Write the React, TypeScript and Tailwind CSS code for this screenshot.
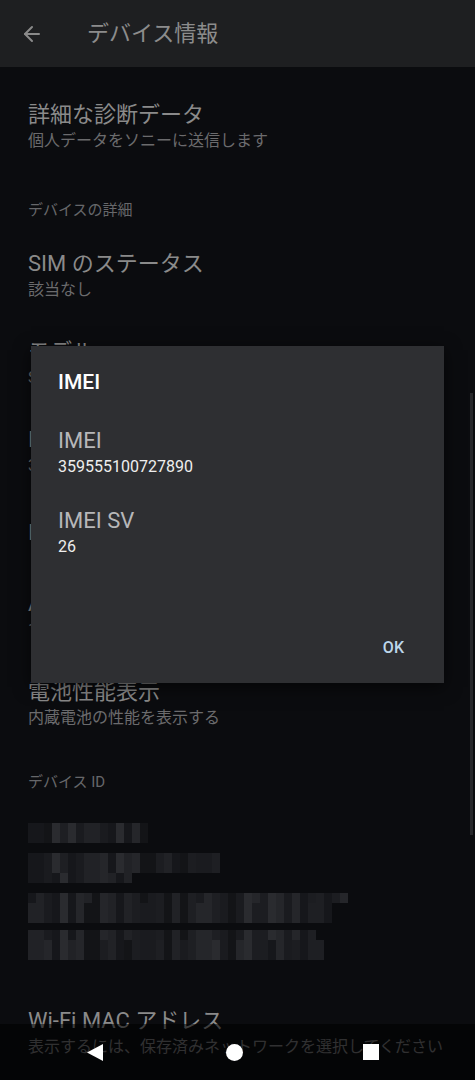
import { ArrowLeft } from 'lucide-react'

const font = { fontFamily: 'Roboto, "Noto Sans CJK JP", sans-serif' }

const shades = [
  'bg-[#16171b]',
  'bg-[#1a1b1f]',
  'bg-[#1e1f23]',
  'bg-[#212226]',
  'bg-[#25262a]',
  'bg-[#2a2b2f]',
  'bg-[#131417]',
  'bg-[#1c1d21]',
]

function MosaicRow({ width, seed }: { width: number; seed: number }) {
  const count = Math.round(width / 8)
  return (
    <div className="flex h-[10px]">
      {Array.from({ length: count }).map((_, i) => {
        const v = (i * 37 + seed * 53 + ((i * i + seed) % 7) * 11) % shades.length
        return <div key={i} className={`w-[8px] h-full ${shades[v]}`} />
      })}
    </div>
  )
}

function Item({ title, sub }: { title: string; sub?: string }) {
  return (
    <div className={`${sub ? 'h-[88px]' : 'h-[76px]'} px-[28px] flex flex-col justify-center`}>
      <div className="text-[22px] leading-[30px] text-[#8a8a8a]">{title}</div>
      {sub && <div className="text-[16px] leading-[22px] text-[#6b6b6d]">{sub}</div>}
    </div>
  )
}

export default function App() {
  return (
    <div className="relative w-[475px] h-[1080px] overflow-hidden bg-[#0b0c0f]" style={font}>
      {/* app bar */}
      <div className="h-[67px] bg-[#1e1f21] flex items-center">
        <ArrowLeft className="w-[24px] h-[24px] ml-[20px] text-[#8a8a8a]" strokeWidth={2} />
        <div className="ml-[43px] text-[22px] text-[#8c8c8c]">デバイス情報</div>
      </div>

      <div className="pt-[15px]">
        <Item title="詳細な診断データ" sub="個人データをソニーに送信します" />
        <div className="px-[28px] pt-[29px] pb-[10px] text-[15px] leading-[22px] text-[#66676a]">
          デバイスの詳細
        </div>
        <Item title="SIM のステータス" sub="該当なし" />
        <Item title="モデル" sub="SO-41A" />
        <Item title="IMEI" sub="359555100727890" />
        <Item title="IP アドレス" />
        <Item title="Android バージョン" sub="10" />
        <Item title="電池性能表示" sub="内蔵電池の性能を表示する" />
        <div className="px-[28px] pt-[24px] pb-[10px] text-[15px] leading-[22px] text-[#66676a]">
          デバイス ID
        </div>

        {/* pixelated ids */}
        <div className="h-[185px] px-[28px] pt-[20px] flex flex-col">
          <MosaicRow width={117} seed={1} />
          <MosaicRow width={117} seed={2} />
          <div className="h-[10px]" />
          <MosaicRow width={195} seed={3} />
          <MosaicRow width={195} seed={4} />
          <MosaicRow width={102} seed={5} />
          <div className="h-[10px]" />
          <MosaicRow width={319} seed={6} />
          <MosaicRow width={304} seed={7} />
          <MosaicRow width={302} seed={8} />
          <div className="h-[7px]" />
          <MosaicRow width={290} seed={9} />
          <MosaicRow width={297} seed={10} />
          <MosaicRow width={297} seed={11} />
        </div>

        <Item title="Wi-Fi MAC アドレス" sub="表示するには、保存済みネットワークを選択してください" />
      </div>

      {/* scrollbar */}
      <div className="absolute left-[470px] top-[393px] w-[3px] h-[442px] bg-[#27282b]" />

      {/* dialog */}
      <div className="absolute left-[31px] top-[346px] w-[413px] h-[337px] bg-[#2e2f32] shadow-[0_4px_16px_rgba(0,0,0,0.6)] flex flex-col pl-[27px] pr-[40px] pt-[22px] pb-[17px]">
        <div className="text-[21px] leading-[28px] font-medium text-white">IMEI</div>
        <div className="mt-[30px] text-[22px] leading-[30px] text-[#b7b7b9]">IMEI</div>
        <div className="text-[16px] leading-[22px] text-[#eeeeee]">359555100727890</div>
        <div className="mt-[28px] text-[22px] leading-[30px] text-[#b7b7b9]">IMEI SV</div>
        <div className="text-[16px] leading-[22px] text-[#eeeeee]">26</div>
        <div className="mt-auto flex justify-end">
          <div className="h-[36px] flex items-center text-[16px] font-medium text-[#bcd6ea]">OK</div>
        </div>
      </div>

      {/* nav bar */}
      <div className="absolute left-0 bottom-0 w-full h-[56px] bg-black/55 flex items-center">
        <div className="w-[17px] ml-[87px]">
          <svg width="17" height="17" viewBox="0 0 17 17">
            <path d="M0 8.5 L16 0 L16 17 Z" fill="#ffffff" />
          </svg>
        </div>
        <div className="ml-[122px] w-[17px] h-[17px] rounded-full bg-white" />
        <div className="ml-[120px] w-[16px] h-[16px] bg-white" />
      </div>
    </div>
  )
}
